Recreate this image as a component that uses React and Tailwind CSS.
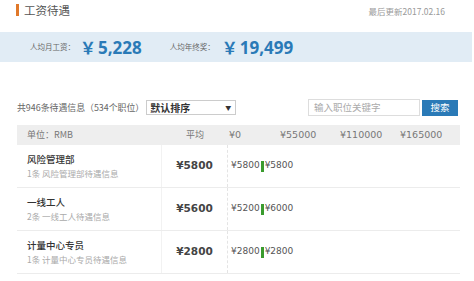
const rows = [
  { name: "风险管理部", sub: "1条 风险管理部待遇信息", avg: "¥5800", lo: "¥5800", hi: "¥5800" },
  { name: "一线工人", sub: "2条 一线工人待遇信息", avg: "¥5600", lo: "¥5200", hi: "¥6000" },
  { name: "计量中心专员", sub: "1条 计量中心专员待遇信息", avg: "¥2800", lo: "¥2800", hi: "¥2800" },
];

const cjk = { fontFamily: '"Noto Sans CJK SC", "Noto Sans", sans-serif' };
const num = { fontFamily: '"DejaVu Sans", "Noto Sans CJK SC", sans-serif' };
const big = { fontFamily: '"Open Sans", "Noto Sans CJK SC", sans-serif' };

export default function App() {
  return (
    <div className="h-[281px] w-[474px] overflow-hidden bg-white text-[#555]" style={cjk}>
      <div className="flex h-[32px] items-start justify-between pl-[16px] pr-[29px] pt-[2px]">
        <div className="flex items-center">
          <span className="mr-[5px] h-[12px] w-[3px] bg-[#e0782a]" />
          <span className="text-[11.5px] leading-[16px] text-[#555]">工资待遇</span>
        </div>
        <span className="mt-[2px] text-[8.5px] leading-[14px] text-[#999]">最后更新2017.02.16</span>
      </div>

      <div className="mr-[2px] flex h-[30px] items-center bg-[#e1ecf5] pl-[30px]">
        <span className="text-[7.5px] text-[#666]">人均月工资：</span>
        <span className="ml-[5px] flex items-baseline font-bold leading-none text-[#2a7ab7]" style={big}>
          <span className="mr-[2px] text-[16px]">￥</span>
          <span className="text-[17px]">5,228</span>
        </span>
        <span className="ml-[28px] text-[7.5px] text-[#666]">人均年终奖：</span>
        <span className="ml-[7px] flex items-baseline font-bold leading-none text-[#2a7ab7]" style={big}>
          <span className="mr-[2px] text-[16px]">￥</span>
          <span className="text-[17px]">19,499</span>
        </span>
      </div>

      <div className="mt-[37px] flex h-[17px] items-center pl-[17px] pr-[16px]">
        <span className="text-[8.9px] text-[#666]">共946条待遇信息（534个职位）</span>
        <div className="ml-[2px] flex h-[15px] w-[90px] items-center justify-between border border-[#ccc] bg-white pl-[3px] pr-[4px]">
          <span className="text-[10px] font-bold text-[#333]">默认排序</span>
          <span className="text-[6px] text-[#333]">▼</span>
        </div>
        <div className="ml-auto flex h-[17px] w-[112px] items-center border border-[#ddd] bg-white pl-[5px]">
          <span className="text-[9.5px] text-[#aaa]">输入职位关键字</span>
        </div>
        <div className="ml-[2px] flex h-[16px] w-[36px] items-center justify-center bg-[#2a7ab7] text-[9.5px] text-white">搜索</div>
      </div>

      <div className="ml-[17px] mr-[14px] mt-[9px]">
        <div className="flex h-[20px] items-center bg-[#eeeeee] text-[9.5px] text-[#777]">
          <span className="w-[145px] pl-[10px] text-[9px]">单位：RMB</span>
          <span className="w-[66px] text-center text-[9px]">平均</span>
          <div className="flex flex-1 items-center" style={num}>
            <span className="w-[52px] pl-[1px]">¥0</span>
            <span className="w-[60px]">¥55000</span>
            <span className="w-[60px]">¥110000</span>
            <span>¥165000</span>
          </div>
        </div>
        {rows.map((r) => (
          <div key={r.name} className="flex h-[43px] items-stretch border-b border-[#ececec]">
            <div className="flex w-[145px] flex-col justify-center border-r border-[#f2f2f2] pl-[10px]">
              <span className="text-[9.5px] font-medium leading-[14px] text-[#333]">{r.name}</span>
              <span className="text-[8.5px] leading-[14px] text-[#aaa]">{r.sub}</span>
            </div>
            <div className="flex w-[66px] items-center justify-center border-r border-dashed border-[#e4e4e4] text-[10.5px] font-bold text-[#444]" style={num}>
              {r.avg}
            </div>
            <div className="flex flex-1 items-center pl-[3px] text-[9px] text-[#555]" style={num}>
              <span>{r.lo}</span>
              <span className="mx-[1px] h-[11px] w-[3px] bg-[#3a9b2e]" />
              <span>{r.hi}</span>
            </div>
          </div>
        ))}
      </div>
    </div>
  );
}
